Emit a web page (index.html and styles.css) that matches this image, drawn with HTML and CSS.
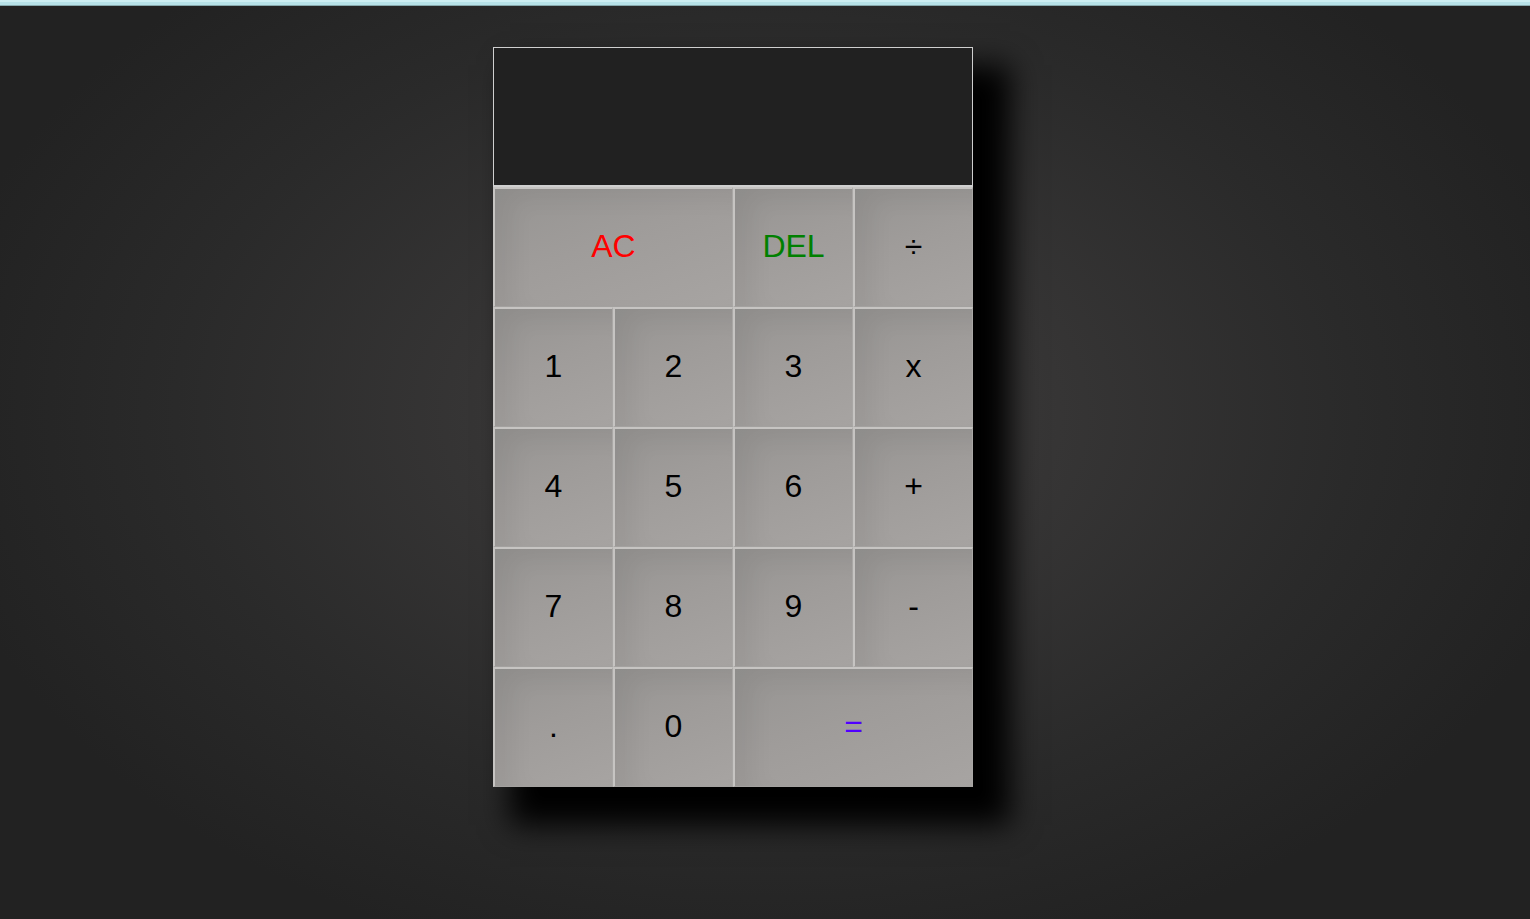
FILE: index.html
```html
<!DOCTYPE html>
<html lang="en">
<head>
<meta charset="utf-8">
<title>Calculator</title>
<link rel="stylesheet" href="styles.css">
</head>
<body>
<div class="topbar"></div>
<main class="page">
  <div class="calculator">
    <div class="output">
      <div class="previous"></div>
      <div class="current"></div>
    </div>
    <button class="key span-two clear">AC</button>
    <button class="key del">DEL</button>
    <button class="key">÷</button>
    <button class="key">1</button>
    <button class="key">2</button>
    <button class="key">3</button>
    <button class="key">x</button>
    <button class="key">4</button>
    <button class="key">5</button>
    <button class="key">6</button>
    <button class="key">+</button>
    <button class="key">7</button>
    <button class="key">8</button>
    <button class="key">9</button>
    <button class="key">-</button>
    <button class="key">.</button>
    <button class="key">0</button>
    <button class="key span-two equals">=</button>
  </div>
</main>
</body>
</html>
```

FILE: styles.css
```css
* {
  box-sizing: border-box;
}

html,
body {
  margin: 0;
  padding: 0;
}

body {
  min-height: 919px;
  font-family: "Liberation Sans", Arial, sans-serif;
  background: radial-gradient(ellipse 55% 62% at 50% 45%, #424141 0%, #363535 35%, #2a2a2a 70%, #222 100%);
  overflow: hidden;
}

.topbar {
  height: 6px;
  background: linear-gradient(#cdeef2 0, #cdeef2 2px, #b7e2e8 2px);
  border-bottom: 1px solid #87a9ad;
}

.page {
  display: flex;
  justify-content: center;
  padding: 41px 64px 0 0;
}

.calculator {
  display: grid;
  grid-template-columns: repeat(4, 120px);
  grid-template-rows: 140px repeat(5, 120px);
  box-shadow: 27px 28px 28px 10px #000;
  background: #000;
}

.output {
  grid-column: 1 / -1;
  background: #212121;
  border: 1px solid #cfcfcf;
  border-bottom-width: 2px;
}

.key {
  font-family: "Liberation Sans", Arial, sans-serif;
  font-size: 32px;
  color: #000;
  margin: 0;
  padding: 0 0 2px 0;
  cursor: pointer;
  outline: none;
  border-style: solid;
  border-width: 2px 1px 1px 2px;
  border-color: #c6c4c2 #a9a7a5 #a3a19f #c6c4c2;
  background: linear-gradient(160deg, #969492 0%, #9f9c9a 45%, #a7a4a2 100%);
  box-shadow: inset 18px 10px 22px rgba(0, 0, 0, 0.05);
}

.span-two {
  grid-column: span 2;
}

.clear {
  color: #ff0000;
}

.del {
  color: #008000;
}

.equals {
  color: #5000ff;
}
```
